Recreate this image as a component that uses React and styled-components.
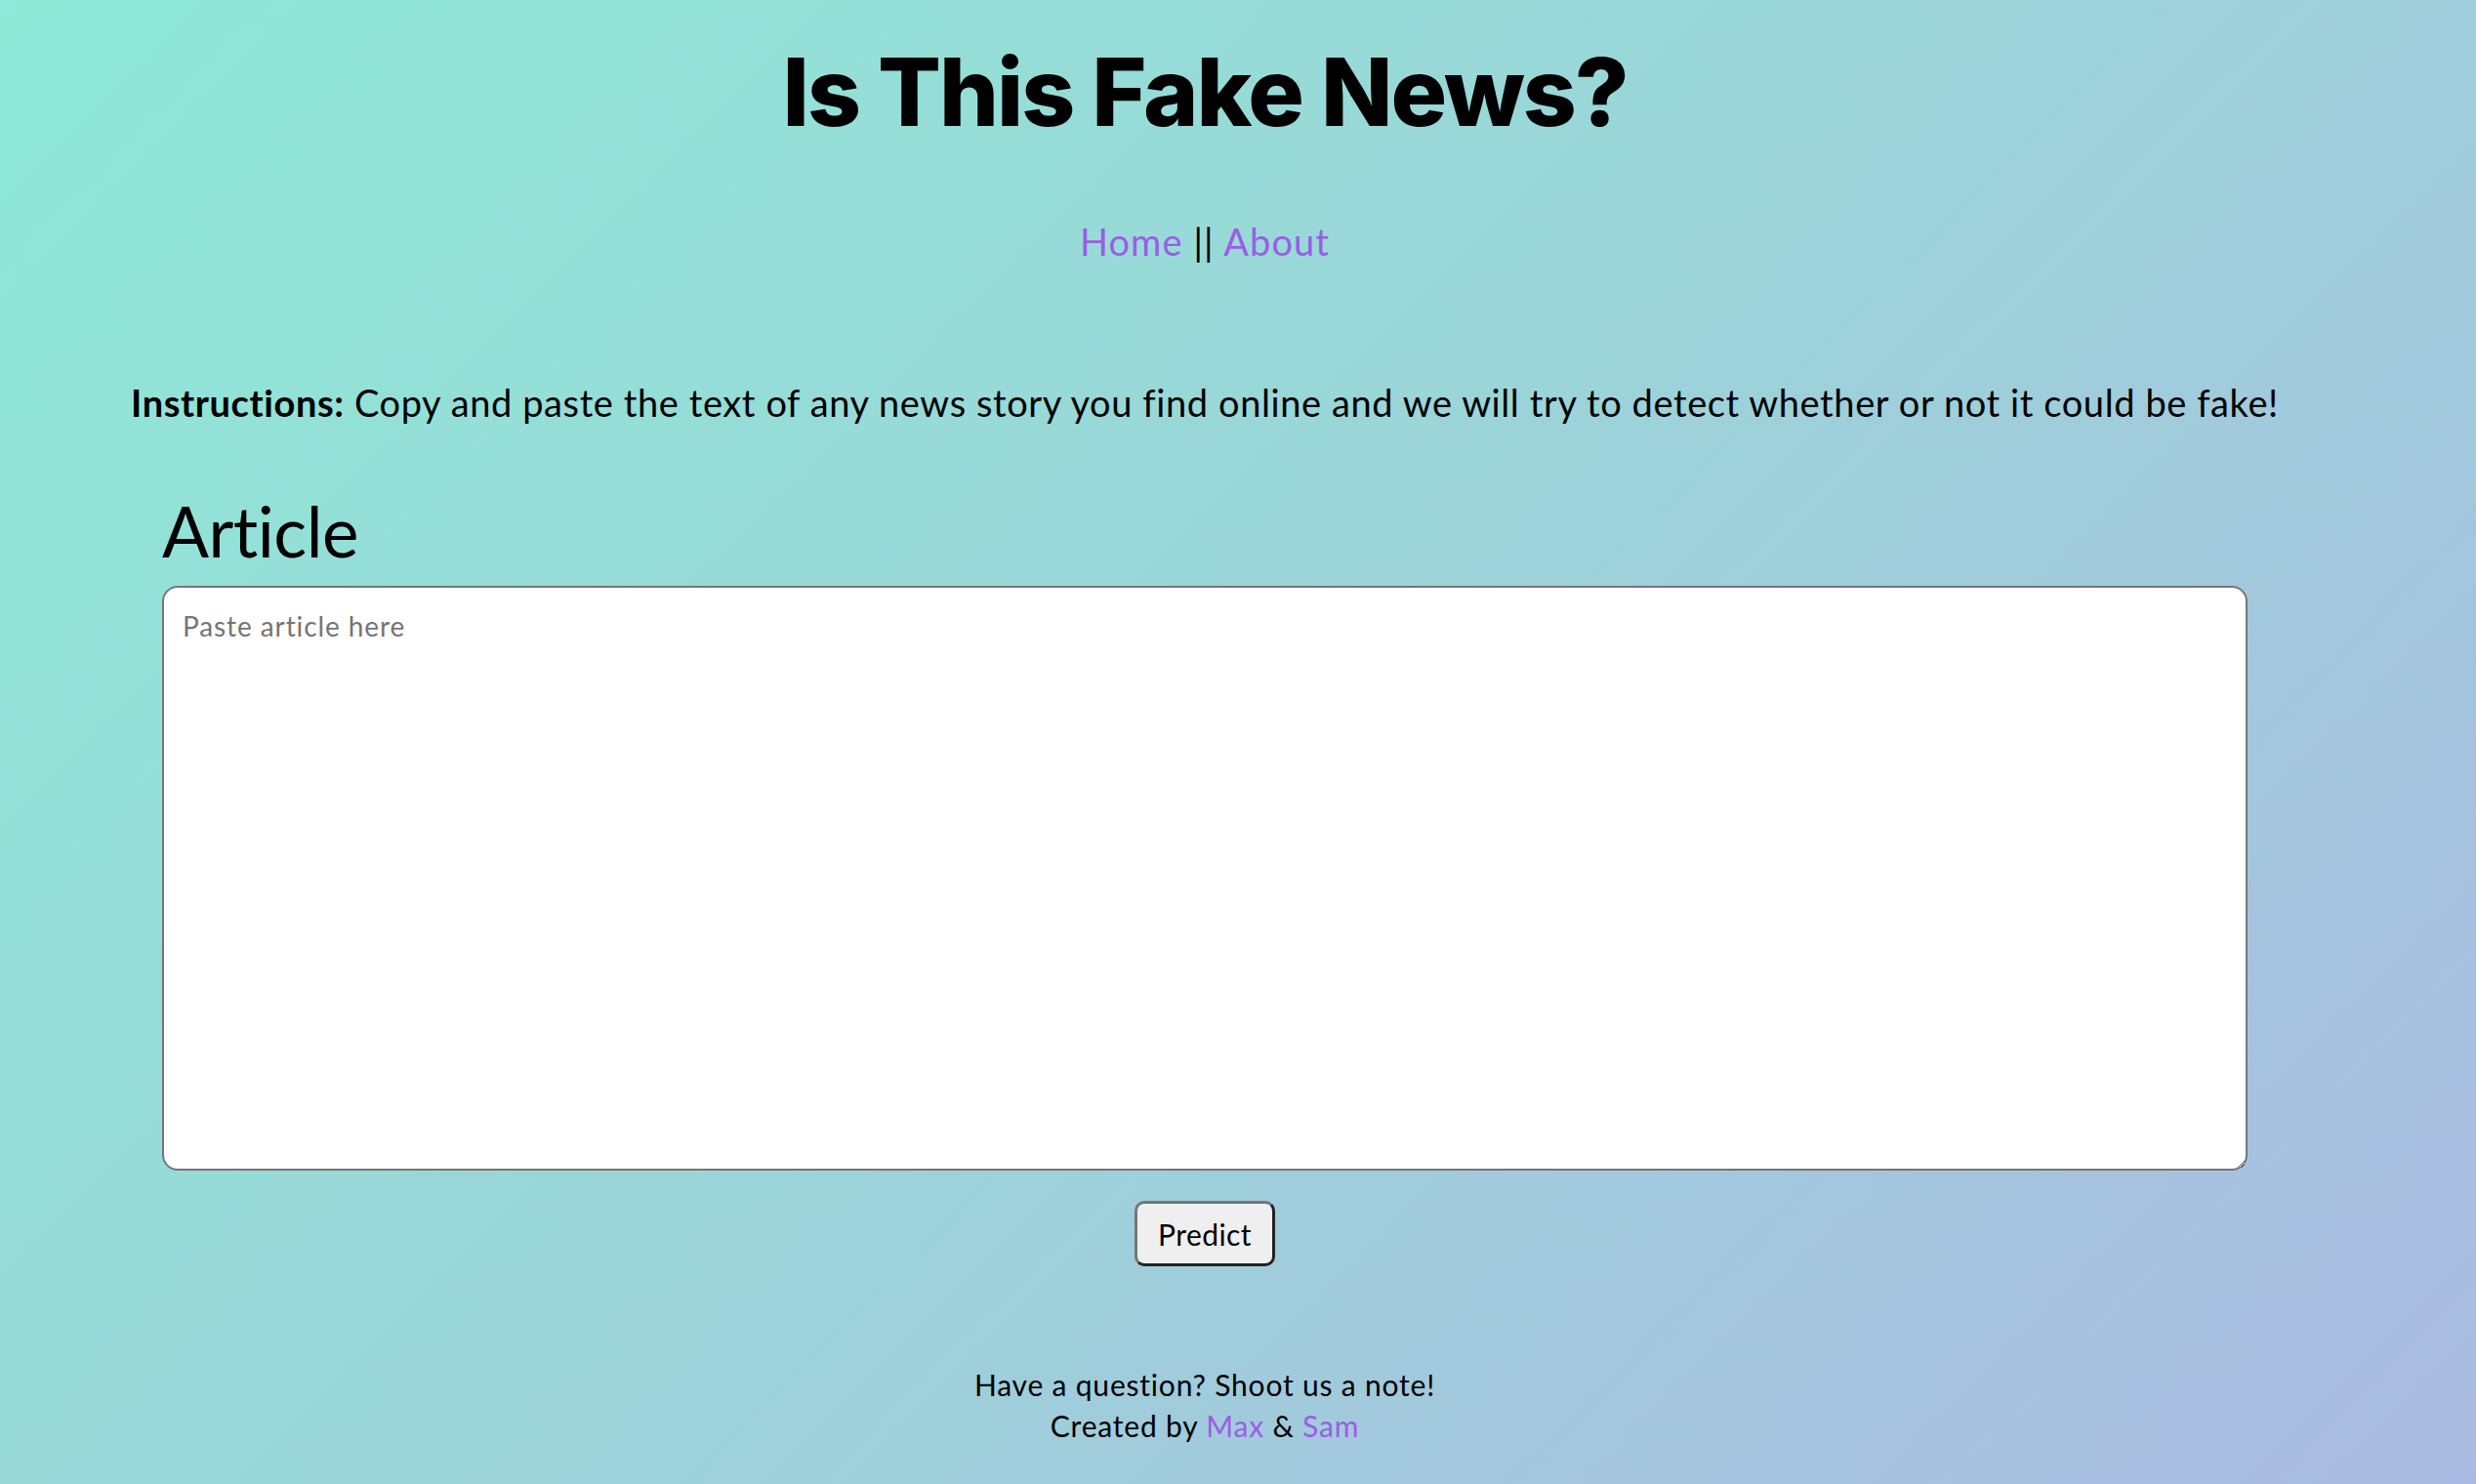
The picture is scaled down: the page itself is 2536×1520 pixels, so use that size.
import styled, { createGlobalStyle } from "styled-components"

const GlobalStyle = createGlobalStyle`
  html, body {
    margin: 0;
    padding: 0;
  }
  body {
    font-family: "Lato", "Liberation Sans", sans-serif;
    color: #000;
  }
`

const Page = styled.div`
  min-height: 1520px;
  box-sizing: border-box;
  padding-right: 68px;
  background: linear-gradient(135deg, #8ee9d7 0%, #9ad6d8 45%, #abbae2 100%);
  overflow: hidden;
`

const Title = styled.h1`
  margin: 36px 0 0;
  font-family: "Inter", "Liberation Sans", sans-serif;
  font-weight: 800;
  font-size: 96px;
  line-height: 116px;
  letter-spacing: -2px;
  text-align: center;
`

const Nav = styled.nav`
  margin-top: 72px;
  font-size: 38px;
  line-height: 46px;
  letter-spacing: 1.1px;
  text-align: center;
`

const Link = styled.a`
  color: #9b5de5;
  text-decoration: none;
`

const Instructions = styled.p`
  margin: 119px 0 0;
  font-size: 38px;
  line-height: 46px;
  letter-spacing: 0.6px;
  text-align: center;

  b {
    font-weight: 700;
  }
`

const Form = styled.section`
  width: 2136px;
  margin: 66px auto 0;
  display: flex;
  flex-direction: column;
  align-items: center;
`

const Heading = styled.h2`
  align-self: stretch;
  margin: 0 0 14px;
  font-weight: 400;
  font-size: 71px;
  line-height: 85px;
  letter-spacing: -0.5px;
`

const ArticleInput = styled.textarea`
  box-sizing: border-box;
  width: 2136px;
  height: 599px;
  padding: 22px 19px;
  border: 2px solid #767676;
  border-radius: 16px;
  background: #fff;
  font-family: "Lato", "Liberation Sans", sans-serif;
  font-size: 28px;
  letter-spacing: 0.9px;
  outline: none;

  &::placeholder {
    color: #757575;
  }
`

const PredictButton = styled.button`
  box-sizing: border-box;
  margin-top: 31px;
  width: 144px;
  height: 67px;
  border: 3px solid;
  border-color: #767676 #222 #222 #767676;
  border-radius: 10px;
  background: #efefef;
  font-family: "Lato", "Liberation Sans", sans-serif;
  font-size: 30px;
  letter-spacing: 0.4px;
  color: #000;
  cursor: pointer;
`

const Footer = styled.footer`
  margin-top: 100px;
  padding-bottom: 20px;
  font-size: 30px;
  line-height: 42px;
  letter-spacing: 0.8px;
  text-align: center;
`

export default function App () {
  return (
    <>
      <GlobalStyle />
      <Page>
        <Title>Is This Fake News?</Title>
        <Nav>
          <Link href="#">Home</Link> || <Link href="#">About</Link>
        </Nav>
        <Instructions>
          <b>Instructions:</b> Copy and paste the text of any news story you find online and we will try to detect whether or not it could be fake!
        </Instructions>
        <Form>
          <Heading>Article</Heading>
          <ArticleInput placeholder="Paste article here" />
          <PredictButton>Predict</PredictButton>
        </Form>
        <Footer>
          <div>Have a question? Shoot us a note!</div>
          <div>
            Created by <Link href="#">Max</Link> &amp; <Link href="#">Sam</Link>
          </div>
        </Footer>
      </Page>
    </>
  )
}
